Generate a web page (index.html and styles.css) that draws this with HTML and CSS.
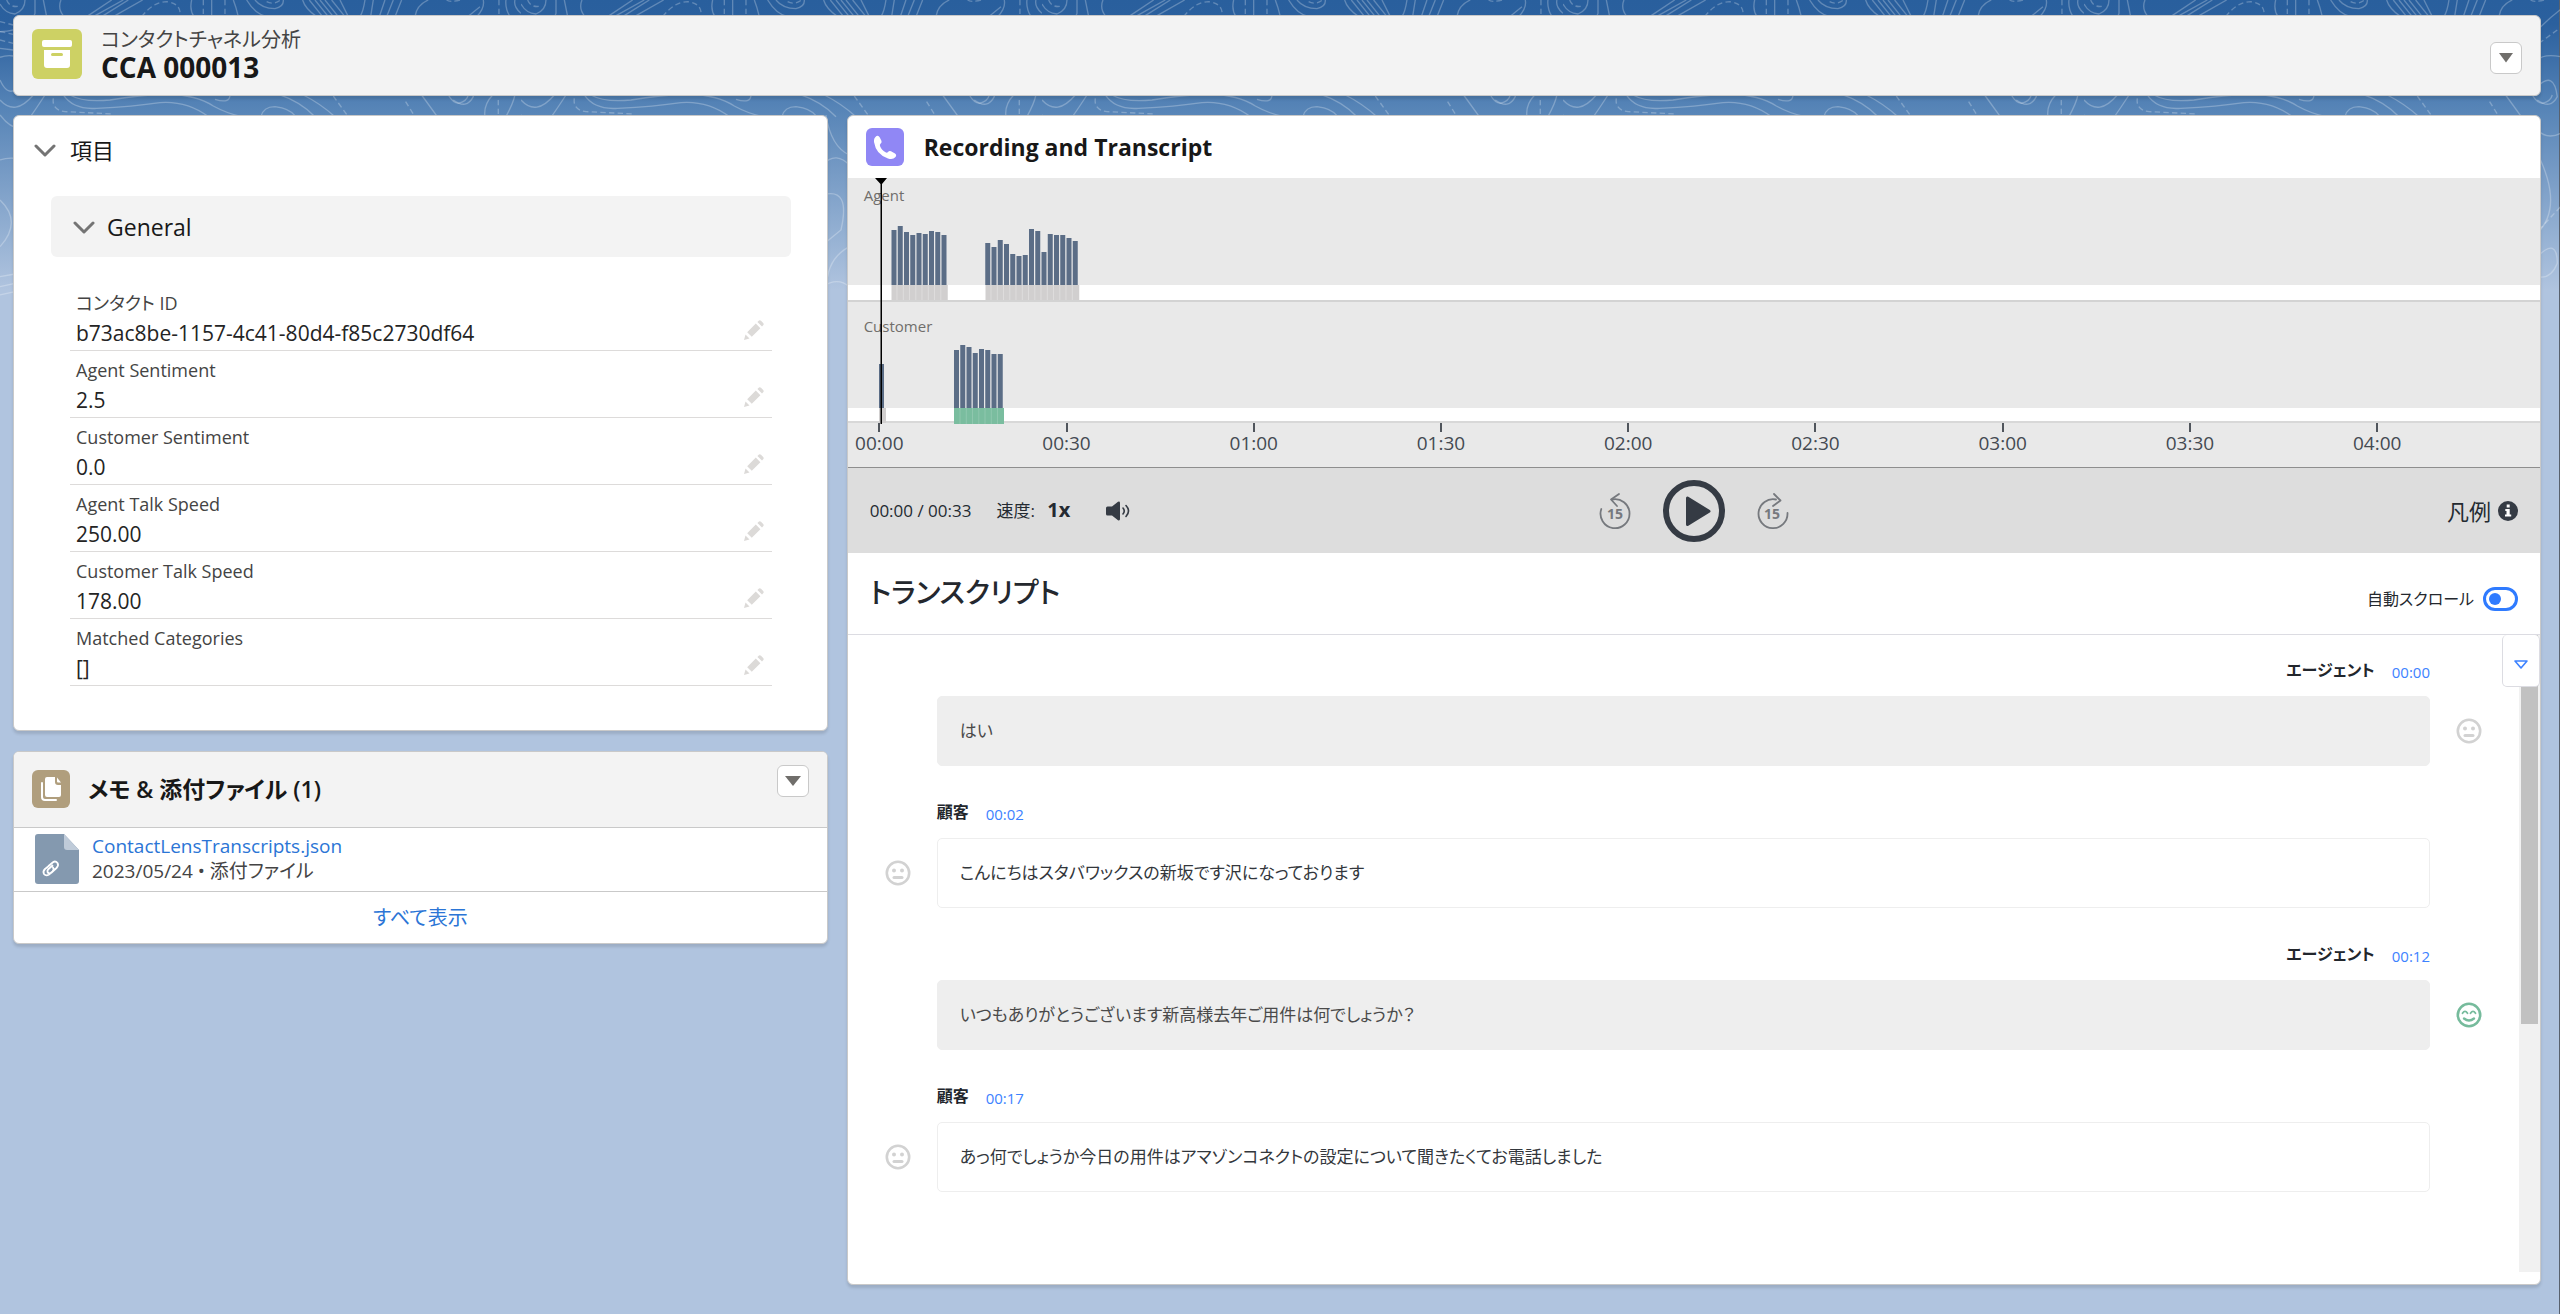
FILE: index.html
```html
<!DOCTYPE html>
<html lang="ja">
<head>
<meta charset="utf-8">
<meta name="viewport" content="width=device-width, initial-scale=1">
<title>CCA 000013</title>
<link rel="stylesheet" href="styles.css">
</head>
<body>
<svg class="backdrop" aria-hidden="true">
  <defs>
    <pattern id="topo" width="521" height="300" patternUnits="userSpaceOnUse">
      <g transform="scale(.3333)" fill="none" stroke="#fff" stroke-opacity=".26" stroke-width="4">
        <path d="M0 12Q15 40 45 42Q75 30 75 0M105 0V40Q90 90 0 95M130 0L140 50M183 0Q172 25 192 50M335 0L260 50M370 0L280 50M385 0L305 50M428 0L340 50M575 0Q568 30 582 50M635 0V50M700 0Q708 20 715 50M740 0Q765 42 800 50M765 0Q785 25 825 26Q852 20 850 0M908 0Q915 25 950 50M928 0L968 50M945 0L985 50M960 0L1000 50M975 0L1015 50M995 0L1035 50M1020 0L1045 50M1095 0Q1090 35 1080 50M1120 0L1112 50M1155 0L1138 50M1180 0L1160 50M1205 0L1185 50M1285 0Q1250 15 1245 50M1450 0Q1455 25 1430 50M1518 0Q1515 25 1530 50M1545 0Q1540 20 1563 40"/>
        <path d="M0 300Q45 350 100 285M0 345Q30 385 62 386Q80 370 135 285M190 285Q220 330 290 325Q400 320 480 308Q560 302 625 350M210 285Q250 308 330 300Q420 285 500 282Q590 285 640 318Q680 340 725 350M645 298Q690 312 690 285M783 350Q790 320 825 320Q870 325 888 350M840 285Q900 305 945 350M910 285Q960 310 1005 350M1265 285L1312 350M1345 285Q1360 310 1375 310Q1400 305 1405 285M1455 350Q1450 315 1478 285M1518 350Q1540 310 1545 285"/>
        <path d="M0 145L40 150M0 172Q20 165 40 168M0 240Q20 285 45 270M0 480Q20 473 45 475M0 600Q68 665 0 740M0 830L45 822M0 860L45 850M0 885L45 875"/>
        <path d="M915 345Q930 440 985 465M905 495Q945 450 990 500M905 585Q990 560 960 690L905 735M985 740Q930 770 920 830M905 860Q950 830 985 860"/>
        <path d="M1360 90Q1400 50 1440 20M1360 180Q1380 160 1430 170M1360 260Q1410 210 1420 290Q1400 330 1360 300M1360 390Q1390 420 1430 400M1360 460Q1440 620 1360 700M1360 770Q1420 710 1420 790Q1400 840 1360 830"/>
        <path stroke-dasharray="16 10" d="M20 0Q30 25 60 18M0 65L40 75M0 95L40 103M0 120L40 130M425 50Q460 5 500 5Q545 10 540 50M610 0V50M675 0V50M800 5Q820 16 842 0M1497 0V50M1380 0Q1350 8 1340 0M160 295Q155 330 195 335L340 342M1000 288L1045 350M1217 305L1245 350M1495 300V350M1365 130L1420 90M1365 690L1430 620"/>
      </g>
    </pattern>
  </defs>
  <rect width="100%" height="300" fill="url(#topo)"/>
</svg>

<div class="page">
  <header class="card page-header">
    <svg class="object-icon" viewBox="0 0 50 50" aria-hidden="true">
      <rect width="50" height="50" rx="6" fill="#cdd164"/>
      <rect x="10" y="11" width="30" height="7" rx="2" fill="#fff"/>
      <path fill="#fff" fill-rule="evenodd" d="M12 21H38V36a3 3 0 0 1-3 3H15a3 3 0 0 1-3-3ZM20.500 24a1.500 1.500 0 0 0 0 3h9a1.500 1.500 0 0 0 0-3Z"/>
    </svg>
    <div class="page-title">
      <p>コンタクトチャネル分析</p>
      <h1>CCA 000013</h1>
    </div>
    <button class="menu-button" type="button" aria-label="アクションを表示">
      <svg class="caret-small" viewBox="0 0 14 10"><path d="M0 0H14L7 9.500Z"/></svg>
    </button>
  </header>

  <main class="columns">
    <div class="side">
      <section class="card details">
        <button class="section-toggle" type="button">
          <svg class="chevron" viewBox="0 0 22 13"><path d="M2 2L11 11L20 2"/></svg>
          <span>項目</span>
        </button>
        <button class="group-toggle" type="button">
          <svg class="chevron" viewBox="0 0 22 13"><path d="M2 2L11 11L20 2"/></svg>
          <span>General</span>
        </button>
        <dl class="fields">
          <div class="field"><dt>コンタクト ID</dt><dd>b73ac8be-1157-4c41-80d4-f85c2730df64</dd><button class="edit" type="button" aria-label="編集"><svg viewBox="0 0 20 20"><path d="M0 20L1.500 14.500L5.500 18.500ZM3.200 12.200L11.800 3.600L16.400 8.200L7.800 16.800ZM13.400 2L15 .6Q16 0 17 .8L19.200 3Q20 4 19.400 5L18 6.600Z"/></svg></button></div>
          <div class="field"><dt>Agent Sentiment</dt><dd>2.5</dd><button class="edit" type="button" aria-label="編集"><svg viewBox="0 0 20 20"><path d="M0 20L1.500 14.500L5.500 18.500ZM3.200 12.200L11.800 3.600L16.400 8.200L7.800 16.800ZM13.400 2L15 .6Q16 0 17 .8L19.200 3Q20 4 19.400 5L18 6.600Z"/></svg></button></div>
          <div class="field"><dt>Customer Sentiment</dt><dd>0.0</dd><button class="edit" type="button" aria-label="編集"><svg viewBox="0 0 20 20"><path d="M0 20L1.500 14.500L5.500 18.500ZM3.200 12.200L11.800 3.600L16.400 8.200L7.800 16.800ZM13.400 2L15 .6Q16 0 17 .8L19.200 3Q20 4 19.400 5L18 6.600Z"/></svg></button></div>
          <div class="field"><dt>Agent Talk Speed</dt><dd>250.00</dd><button class="edit" type="button" aria-label="編集"><svg viewBox="0 0 20 20"><path d="M0 20L1.500 14.500L5.500 18.500ZM3.200 12.200L11.800 3.600L16.400 8.200L7.800 16.800ZM13.400 2L15 .6Q16 0 17 .8L19.200 3Q20 4 19.400 5L18 6.600Z"/></svg></button></div>
          <div class="field"><dt>Customer Talk Speed</dt><dd>178.00</dd><button class="edit" type="button" aria-label="編集"><svg viewBox="0 0 20 20"><path d="M0 20L1.500 14.500L5.500 18.500ZM3.200 12.200L11.800 3.600L16.400 8.200L7.800 16.800ZM13.400 2L15 .6Q16 0 17 .8L19.200 3Q20 4 19.400 5L18 6.600Z"/></svg></button></div>
          <div class="field"><dt>Matched Categories</dt><dd>[]</dd><button class="edit" type="button" aria-label="編集"><svg viewBox="0 0 20 20"><path d="M0 20L1.500 14.500L5.500 18.500ZM3.200 12.200L11.800 3.600L16.400 8.200L7.800 16.800ZM13.400 2L15 .6Q16 0 17 .8L19.200 3Q20 4 19.400 5L18 6.600Z"/></svg></button></div>
        </dl>
      </section>

      <section class="card files">
        <header class="files-header">
          <svg class="files-icon" viewBox="0 0 38 38" aria-hidden="true">
            <rect width="38" height="38" rx="6" fill="#b09e7d"/>
            <path d="M10 13V27a3 3 0 0 0 3 3H24" fill="none" stroke="#fff" stroke-width="2" stroke-linecap="round"/>
            <path d="M15 7H23V12a3 3 0 0 0 3 3H29V25a2 2 0 0 1-2 2H15a2 2 0 0 1-2-2V9a2 2 0 0 1 2-2Z" fill="#fff"/>
            <path d="M25 7.500L29 12.500H26a1 1 0 0 1-1-1Z" fill="#fff"/>
          </svg>
          <h2>メモ &amp; 添付ファイル (1)</h2>
          <button class="menu-button" type="button" aria-label="アクションを表示">
            <svg class="caret-large" viewBox="0 0 16 10"><path d="M0 0H16L8 10Z"/></svg>
          </button>
        </header>
        <div class="file">
          <svg class="file-icon" viewBox="0 0 44 50" aria-hidden="true">
            <path d="M3 0H29L44 16V47a3 3 0 0 1-3 3H3a3 3 0 0 1-3-3V3a3 3 0 0 1 3-3Z" fill="#8499af"/>
            <path d="M29 0L44 16H32a3 3 0 0 1-3-3Z" fill="#bfcbd9"/>
            <path fill="none" stroke="#fff" stroke-width="1.800" stroke-linecap="round" stroke-linejoin="round" d="M13.500 32L18 28.200Q20.500 26.500 22.500 29Q24 31.500 21.500 34L16 39Q13.500 40 12.500 38Q12 36.500 13.500 35L17.500 31.500M18 33.500Q19.500 35.500 17.500 37.500L14 40.500Q11 42.500 9 40Q7.500 37.500 10 35L12.500 33"/>
          </svg>
          <div class="file-text">
            <a href="#file">ContactLensTranscripts.json</a>
            <p>2023/05/24&nbsp;•&nbsp;添付ファイル</p>
          </div>
        </div>
        <a class="view-all" href="#all">すべて表示</a>
      </section>
    </div>

    <section class="card recording">
      <header class="recording-header">
        <svg class="files-icon" viewBox="0 0 38 38" aria-hidden="true">
          <rect width="38" height="38" rx="6" fill="#9087f5"/>
          <path fill="#fff" d="M8 14Q7.500 10 10.500 8Q12.500 7 13.800 9.500L15.500 13Q16 14.500 14.500 15.700Q13.500 16.500 14 18Q15.500 22 20 24.500Q21.200 25 22 24Q23.300 22.300 25 23.200L29 25.500Q31 27 29.500 29Q27 32 22 30.500Q10 26.500 8 14Z"/>
        </svg>
        <h2>Recording and Transcript</h2>
      </header>

      <div class="timeline">
        <div class="track">
          <span class="track-name">Agent</span>
          <svg class="wave" aria-hidden="true">
            <rect y="107" width="100%" height="15" fill="#fff"/>
            <rect y="122" width="100%" height="2" fill="#d3d3d3"/>
            <path d="M43.500 107h56.250v15h-56.250zM137.500 107h93.750v15h-93.750z" fill="#d1cfcf"/>
            <path stroke="#dedcdc" stroke-width="1" d="M49 107v15M55.300 107v15M61.500 107v15M67.800 107v15M74 107v15M80.300 107v15M86.500 107v15M92.800 107v15M143 107v15M149.300 107v15M155.500 107v15M161.800 107v15M168 107v15M174.300 107v15M180.500 107v15M186.800 107v15M193 107v15M199.300 107v15M205.500 107v15M211.800 107v15M218 107v15M224.300 107v15"/>
            <path stroke="#5b6d86" stroke-width="5" d="M46 107V52M52.250 107V48M58.500 107V54M64.750 107V57M71 107V55M77.250 107V56M83.500 107V53M89.750 107V54M96 107V57M139.750 107V65M146 107V69M152.250 107V62M158.500 107V66M164.750 107V76M171 107V78M177.250 107V77M183.500 107V51M189.750 107V53M196 107V74M202.250 107V56M208.500 107V57M214.750 107V57M221 107V60M227.250 107V63"/>
          </svg>
        </div>
        <div class="track track-customer">
          <span class="track-name">Customer</span>
          <svg class="wave" aria-hidden="true">
            <rect y="106" width="100%" height="13" fill="#fff"/>
            <rect y="119" width="100%" height="2" fill="#d8d8d8"/>
            <path d="M31 106h7v15h-7z" fill="#d1cfcf"/>
            <path d="M106 106h50v16h-50z" fill="#7abd9f"/>
            <path stroke="#8fc7ae" stroke-width="1" d="M112 106v16M118.300 106v16M124.500 106v16M130.800 106v16M137 106v16M143.300 106v16M149.500 106v16"/>
            <path stroke="#5b6d86" stroke-width="5" d="M33.500 106V62M108.500 106V48M114.750 106V43M121 106V45M127.250 106V51M133.500 106V47M139.750 106V48M146 106V52M152.250 106V52"/>
          </svg>
        </div>
        <ol class="axis">
          <li>00:00</li><li>00:30</li><li>01:00</li><li>01:30</li><li>02:00</li><li>02:30</li><li>03:00</li><li>03:30</li><li>04:00</li><li>04:30</li>
        </ol>
        <svg class="playhead" viewBox="0 0 12 246" aria-hidden="true"><path d="M0 0H12L7 6V246H5.500V6Z"/></svg>
      </div>

      <div class="controls">
        <div class="controls-left">
          <span>00:00 / 00:33</span>
          <button class="speed" type="button">速度: <b>1x</b></button>
          <button class="icon-button" type="button" aria-label="音量">
            <svg class="speaker" viewBox="0 0 24 20"><path fill="#353b44" d="M0 7a1.500 1.500 0 0 1 1.500-1.500H6L12 .8Q14 0 14 2V18Q14 20 12 19.200L6 14.500H1.500A1.500 1.500 0 0 1 0 13Z"/><path fill="none" stroke="#353b44" stroke-width="1.600" stroke-linecap="round" d="M17 7Q19.500 10 17 13M20 4.500Q25 10 20 15.500"/></svg>
          </button>
        </div>
        <div class="controls-center">
          <button class="icon-button" type="button" aria-label="15 秒戻る">
            <svg class="skip" viewBox="0 0 32 38"><g fill="none" stroke="#76797e" stroke-width="1.800" stroke-linecap="round" stroke-linejoin="round"><path d="M2.300 17A14.500 14.500 0 1 0 13 7.500"/><path d="M20 2L12 7.500L18 14"/></g><text x="8" y="27">15</text></svg>
          </button>
          <button class="icon-button" type="button" aria-label="再生">
            <svg class="play" viewBox="0 0 62 62"><circle cx="31" cy="31" r="28" fill="none" stroke="#353b44" stroke-width="6"/><path fill="#353b44" stroke="#353b44" stroke-width="3" stroke-linejoin="round" d="M24.500 18V44.500L46 31.200Z"/></svg>
          </button>
          <button class="icon-button" type="button" aria-label="15 秒進む">
            <svg class="skip" viewBox="0 0 32 38"><g fill="none" stroke="#76797e" stroke-width="1.800" stroke-linecap="round" stroke-linejoin="round"><path d="M30.500 21A14.500 14.500 0 1 1 19 7.500"/><path d="M17 2L23.500 8.500L16 14"/></g><text x="7" y="27">15</text></svg>
          </button>
        </div>
        <button class="legend" type="button">凡例
          <svg class="info" viewBox="0 0 20 20"><circle cx="10" cy="10" r="10" fill="#353b44"/><path fill="#fff" d="M8.700 3.500h3v3h-3zM7.300 8h4.400v5.600h1.500v2H7v-2h1.500V10H7.300z"/></svg>
        </button>
      </div>

      <header class="transcript-header">
        <h3>トランスクリプト</h3>
        <label class="auto-scroll">自動スクロール <input class="switch" type="checkbox"></label>
      </header>

      <div class="transcript">
        <ol class="messages">
          <li class="message agent">
            <div class="meta"><b>エージェント</b><a href="#t0">00:00</a></div>
            <p>はい</p>
            <svg class="face" viewBox="0 0 26 26"><circle cx="13" cy="13" r="11.200" fill="none" stroke="#d2d2d2" stroke-width="2.600"/><circle cx="9" cy="10.500" r="2" fill="#d2d2d2"/><circle cx="17" cy="10.500" r="2" fill="#d2d2d2"/><rect x="7.500" y="16" width="11" height="3" rx="1.500" fill="#d2d2d2"/></svg>
          </li>
          <li class="message customer">
            <div class="meta"><b>顧客</b><a href="#t2">00:02</a></div>
            <p>こんにちはスタバワックスの新坂です沢になっております</p>
            <svg class="face" viewBox="0 0 26 26"><circle cx="13" cy="13" r="11.200" fill="none" stroke="#d2d2d2" stroke-width="2.600"/><circle cx="9" cy="10.500" r="2" fill="#d2d2d2"/><circle cx="17" cy="10.500" r="2" fill="#d2d2d2"/><rect x="7.500" y="16" width="11" height="3" rx="1.500" fill="#d2d2d2"/></svg>
          </li>
          <li class="message agent">
            <div class="meta"><b>エージェント</b><a href="#t12">00:12</a></div>
            <p>いつもありがとうございます新高様去年ご用件は何でしょうか？</p>
            <svg class="face" viewBox="0 0 26 26"><circle cx="13" cy="13" r="11.200" fill="none" stroke="#76bb9c" stroke-width="2.600"/><path fill="none" stroke="#76bb9c" stroke-width="1.800" stroke-linecap="round" d="M6.500 11.200Q9 7.500 11.500 11.200M14.500 11.200Q17 7.500 19.500 11.200"/><path fill="none" stroke="#76bb9c" stroke-width="2.400" stroke-linecap="round" d="M8 16.500Q13 20.500 18 16.500"/></svg>
          </li>
          <li class="message customer">
            <div class="meta"><b>顧客</b><a href="#t17">00:17</a></div>
            <p>あっ何でしょうか今日の用件はアマゾンコネクトの設定について聞きたくてお電話しました</p>
            <svg class="face" viewBox="0 0 26 26"><circle cx="13" cy="13" r="11.200" fill="none" stroke="#d2d2d2" stroke-width="2.600"/><circle cx="9" cy="10.500" r="2" fill="#d2d2d2"/><circle cx="17" cy="10.500" r="2" fill="#d2d2d2"/><rect x="7.500" y="16" width="11" height="3" rx="1.500" fill="#d2d2d2"/></svg>
          </li>
        </ol>
        <div class="scrollbar"><div class="thumb"></div></div>
        <button class="expand" type="button" aria-label="メニュー">
          <svg class="outline-caret" viewBox="0 0 14 9"><path d="M1 1H13L7 8Z"/></svg>
        </button>
      </div>
    </section>
  </main>
</div>
</body>
</html>
```
FILE: styles.css
```css
* { box-sizing: border-box; }

body {
  margin: 0;
  min-height: 100vh;
  background: linear-gradient(#295f9d 0, #2b609e 24px, #5583b6 105px, #b0c4df 290px) no-repeat #b0c4df;
  border-right: 1px solid #59616d;
  color: #181818;
  font-family: "Open Sans", "Noto Sans CJK JP", sans-serif;
  font-feature-settings: "palt";
  font-size: 20px;
  line-height: 28px;
}

h1, h2, h3, p, ol, dl, dd { margin: 0; padding: 0; }
ol { list-style: none; }
a { color: #2b75d6; text-decoration: none; }
svg { display: block; flex: none; }

button {
  margin: 0;
  padding: 0;
  border: 0;
  background: none;
  color: inherit;
  font: inherit;
  font-feature-settings: inherit;
}

.backdrop {
  position: absolute;
  inset: 0;
  width: 100%;
  height: 300px;
}

.page {
  position: relative;
  display: flex;
  flex-direction: column;
  gap: 19px;
  min-height: 100vh;
  padding: 15px 18px 29px 13px;
}

.card {
  border: 1px solid #c9c9c9;
  border-radius: 6px;
  background: #fff;
  box-shadow: 0 3px 3px rgba(0, 0, 0, .12);
}

.page-header {
  display: flex;
  align-items: flex-start;
  gap: 19px;
  padding: 13px 18px 12px;
  background: #f3f3f3;
}

.object-icon { width: 50px; height: 50px; }
.page-title { flex: 1; }
.page-title p { line-height: 22px; color: #444; }
.page-title h1 { font-size: 28px; font-weight: 700; line-height: 32px; }

.menu-button {
  display: flex;
  align-items: center;
  justify-content: center;
  width: 32px;
  height: 32px;
  border: 1px solid #c9c9c9;
  border-radius: 6px;
  background: #fff;
}

.page-header .menu-button { margin-top: 13px; }
.caret-small { width: 14px; height: 10px; fill: #706e6b; }
.caret-large { width: 16px; height: 10px; fill: #706e6b; }

.columns {
  flex: 1;
  display: grid;
  grid-template-columns: minmax(0, 815fr) minmax(0, 1695fr);
  gap: 19px;
}

.side { display: flex; flex-direction: column; gap: 20px; }

.details { padding: 20px 36px 44px 37px; }

.section-toggle, .group-toggle {
  display: flex;
  align-items: center;
  text-align: left;
}

.section-toggle { gap: 14px; margin-left: -17px; font-size: 22px; }
.group-toggle {
  gap: 12px;
  width: 100%;
  margin-top: 32px;
  padding: 17px 22px 16px;
  border-radius: 6px;
  background: #f3f3f3;
  font-size: 23px;
}

.chevron { width: 22px; height: 13px; fill: none; stroke: #747474; stroke-width: 3; stroke-linecap: round; stroke-linejoin: round; }

.fields { margin: 27px 19px 0; }
.field {
  display: grid;
  grid-template-columns: 1fr auto;
  padding: 5px 8px 1px 6px;
  height: 67px;
  border-bottom: 1px solid #dddbda;
}
.field dt { grid-column: 1; font-size: 18px; line-height: 28px; color: #444; }
.field dd { grid-column: 1; font-size: 21px; line-height: 28px; color: #242424; }
.edit { grid-column: 2; grid-row: 1 / 3; align-self: end; padding-bottom: 9px; }
.edit svg { width: 20px; height: 20px; fill: #dcdad8; }

.files { overflow: hidden; }
.files-header {
  display: flex;
  align-items: flex-start;
  gap: 18px;
  padding: 13px 18px 19px;
  border-bottom: 1px solid #c9c9c9;
  background: #f3f3f3;
}
.files-icon { width: 38px; height: 38px; }
.files-header .files-icon { margin-top: 5px; }
.files-header h2 { flex: 1; margin-top: 10px; font-size: 23px; font-weight: 600; }

.file {
  display: flex;
  align-items: flex-start;
  gap: 13px;
  padding: 6px 21px 7px;
  border-bottom: 1px solid #c9c9c9;
}
.file-icon { width: 44px; height: 50px; }
.file-text { font-size: 19px; line-height: 25px; }
.file-text p { color: #444; }
.view-all { display: block; padding: 12px 0 11px; text-align: center; }

.recording { display: flex; flex-direction: column; overflow: hidden; }
.recording-header { display: flex; align-items: center; gap: 20px; padding: 12px 18px; }
.recording-header h2 { font-size: 23px; font-weight: 700; }

.timeline { position: relative; overflow: hidden; background: #e9e9e9; border-bottom: 1px solid #8e8e8e; }
.track { display: grid; height: 124px; }
.track-customer { height: 121px; }
.track-name, .wave { grid-area: 1 / 1; }
.track-name { padding: 6px 16px; font-size: 15px; line-height: 22px; color: #706e6b; }
.track-customer .track-name { padding-top: 13px; }
.wave { width: 100%; height: 100%; overflow: visible; }

.axis {
  display: grid;
  grid-template-columns: repeat(10, 1fr);
  margin: 0 -118px 0 -62px;
  height: 44px;
  font-size: 19px;
  line-height: 22px;
  text-align: center;
  color: #444a52;
}
.axis li::before {
  content: "";
  display: block;
  width: 2px;
  height: 9px;
  margin: 0 auto;
  background: #50555c;
}
.playhead { position: absolute; top: 0; left: 27px; width: 12px; height: 246px; }

.controls {
  display: grid;
  grid-template-columns: 1fr auto 1fr;
  align-items: center;
  height: 85px;
  padding: 0 22px;
  background: #ddd;
  color: #242a31;
}
.controls-left { display: flex; align-items: center; gap: 25px; font-size: 17px; }
.speed b { margin-left: 8px; font-size: 20px; font-weight: 700; }
.icon-button { display: block; }
.speaker { width: 24px; height: 20px; margin-left: 11px; }
.controls-center { display: flex; align-items: center; gap: 32px; }
.skip { width: 32px; height: 38px; }
.skip text { font-family: "Open Sans", sans-serif; font-size: 14px; font-weight: 700; fill: #76797e; }
.play { width: 62px; height: 62px; }
.legend { display: flex; align-items: center; justify-self: end; gap: 7px; font-size: 22px; }
.info { width: 20px; height: 20px; }

.transcript-header {
  display: flex;
  align-items: flex-start;
  justify-content: space-between;
  height: 82px;
  padding: 20px 22px 0;
  border-bottom: 1px solid #dcdce2;
  color: #24282e;
}
.transcript-header h3 { font-size: 28px; font-weight: 500; line-height: 38px; }
.auto-scroll { display: flex; align-items: center; gap: 9px; margin-top: 12px; font-size: 16px; }
.switch {
  appearance: none;
  width: 35px;
  height: 24px;
  margin: 0;
  padding: 3px;
  border: 3px solid #2f7bff;
  border-radius: 12px;
}
.switch::before {
  content: "";
  display: block;
  width: 12px;
  height: 12px;
  border-radius: 50%;
  background: #2f7bff;
}

.transcript { position: relative; flex: 1; display: flex; padding-bottom: 12px; }
.messages { flex: 1; }
.message {
  display: grid;
  grid-template-columns: 89px minmax(0, 1fr) 89px;
  margin-bottom: 11px;
  font-size: 17px;
}
.meta { grid-column: 2; display: flex; align-items: flex-end; gap: 17px; height: 61px; padding-bottom: 12px; font-size: 16px; }
.meta b { font-weight: 600; color: #22262c; }
.meta a { font-size: 15px; line-height: 23px; color: #3d82ff; }
.agent .meta { justify-content: flex-end; }
.message p {
  grid-column: 2;
  grid-row: 2;
  padding: 20px 22px;
  border: 1px solid #eee;
  border-radius: 5px;
  color: #33373c;
}
.agent p { background: #eee; color: #4a4a4a; }
.face { grid-row: 2; place-self: center; width: 26px; height: 26px; }
.agent .face { grid-column: 3; margin-right: 11px; }
.customer .face { grid-column: 1; margin-left: 11px; }

.scrollbar { width: 21px; padding: 0 2px; background: #f1f1f1; }
.thumb { height: 61%; background: #c1c1c1; }

.expand {
  position: absolute;
  top: 0;
  right: 0;
  display: flex;
  align-items: center;
  justify-content: center;
  width: 38px;
  height: 52px;
  padding-top: 8px;
  border: 1px solid #dcdce2;
  border-top: 0;
  border-radius: 5px;
  background: #fff;
}
.outline-caret { width: 14px; height: 9px; fill: none; stroke: #3d82ff; stroke-width: 1.6; stroke-linejoin: round; }
```
